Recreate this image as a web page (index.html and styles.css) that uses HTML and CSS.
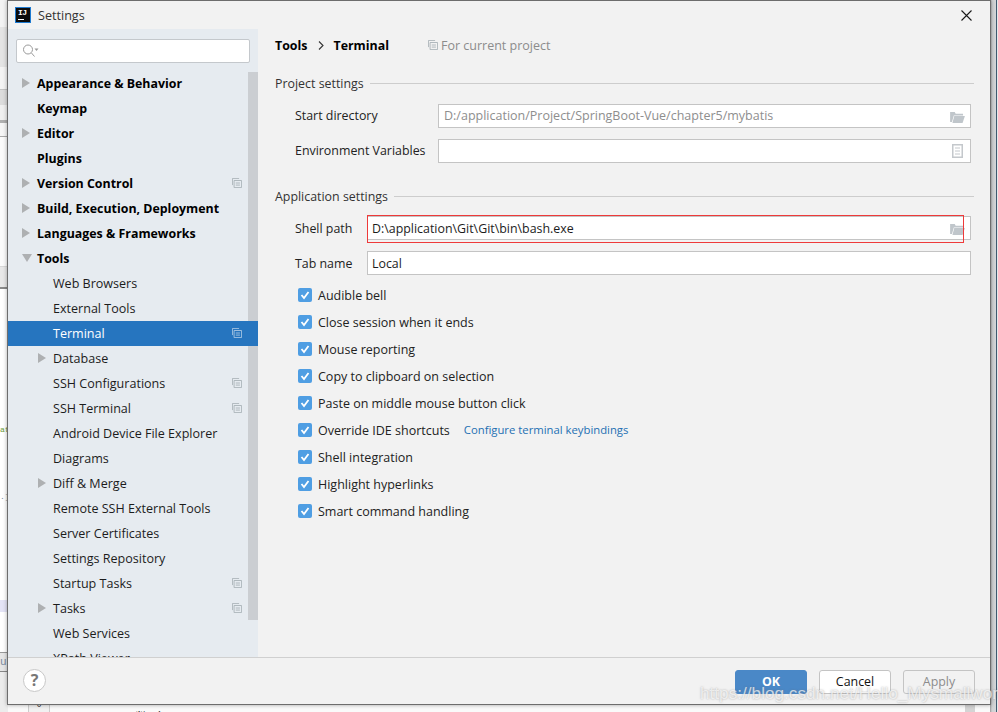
FILE: index.html
```html
<!DOCTYPE html>
<html lang="en">
<head>
<meta charset="utf-8">
<title>Settings</title>
<link rel="stylesheet" href="styles.css">
</head>
<body>
<svg class="defs" width="0" height="0">
  <symbol id="copy" viewBox="0 0 12 12">
    <path d="M.5 8.5V.5h8M2.500 3h9v8.500h-9zM4.500 6h5M4.500 8.500h5" fill="none" stroke="currentColor" stroke-width="1.100"/>
  </symbol>
  <symbol id="folder" viewBox="0 0 16 13">
    <path d="M0 1h5l1 2h8v2H4L2 12H0z" fill="currentColor"/>
    <path d="M4.500 5.500H16L13.500 13H2.500z" fill="currentColor"/>
  </symbol>
  <symbol id="tick" viewBox="0 0 14 14">
    <rect width="14" height="14" rx="2" fill="#4f9ee3"/>
    <path d="M3.500 7l2.500 3 4.500-6" fill="none" stroke="#fff" stroke-width="1.800"/>
  </symbol>
</svg>
<div class="desktop">
  <div class="bg-left">
    <div class="s1"></div><div class="s2"></div><div class="s3"></div><div class="s4"></div><div class="s3b"></div><div class="s5"></div><div class="s6"></div>
    <div class="s7"><span class="code-g">at</span></div>
    <div class="s8"><span class="code-b">.]</span></div>
    <div class="s9"></div><div class="s10"></div><div class="s11"><span class="code-b">u</span></div><div class="s12"></div>
  </div>
  <div class="bg-bottom">
    <div class="gutter">°</div>
    <div class="bottom-text">数 命</div>
    <div class="thumb"></div>
  </div>
  <div class="bg-right"></div>
</div>

<div class="dialog">
  <header class="titlebar">
    <div class="logo"><span class="logo-text">IJ</span><span class="logo-bar"></span></div>
    <span class="title">Settings</span>
    <svg class="close" width="11" height="11" viewBox="0 0 11 11"><path d="M.5.5l10 10M10.500.5l-10 10" stroke="#1a1a1a" stroke-width="1.100" fill="none"/></svg>
  </header>
  <div class="content">
    <aside class="sidebar">
      <div class="search">
        <svg width="17" height="13" viewBox="0 0 17 13"><circle cx="6" cy="5.500" r="4.500" fill="none" stroke="#9a9a9a"/><path d="M9.500 9l3 3.500" stroke="#9a9a9a" fill="none"/><path d="M12.500 4.500h4l-2 2.500z" fill="#9a9a9a"/></svg>
      </div>
      <div class="scrollbar"></div>
      <ul class="tree">
        <li class="row top"><i class="arrow"></i>Appearance &amp; Behavior</li>
        <li class="row top"><i class="gap"></i>Keymap</li>
        <li class="row top"><i class="arrow"></i>Editor</li>
        <li class="row top"><i class="gap"></i>Plugins</li>
        <li class="row top"><i class="arrow"></i>Version Control<svg class="pj"><use href="#copy"/></svg></li>
        <li class="row top"><i class="arrow"></i>Build, Execution, Deployment</li>
        <li class="row top"><i class="arrow"></i>Languages &amp; Frameworks</li>
        <li class="row top"><i class="arrow down"></i>Tools</li>
        <li class="row sub"><i class="gap"></i>Web Browsers</li>
        <li class="row sub"><i class="gap"></i>External Tools</li>
        <li class="row sub selected"><i class="gap"></i>Terminal<svg class="pj"><use href="#copy"/></svg></li>
        <li class="row sub"><i class="arrow"></i>Database</li>
        <li class="row sub"><i class="gap"></i>SSH Configurations<svg class="pj"><use href="#copy"/></svg></li>
        <li class="row sub"><i class="gap"></i>SSH Terminal<svg class="pj"><use href="#copy"/></svg></li>
        <li class="row sub"><i class="gap"></i>Android Device File Explorer</li>
        <li class="row sub"><i class="gap"></i>Diagrams</li>
        <li class="row sub"><i class="arrow"></i>Diff &amp; Merge</li>
        <li class="row sub"><i class="gap"></i>Remote SSH External Tools</li>
        <li class="row sub"><i class="gap"></i>Server Certificates</li>
        <li class="row sub"><i class="gap"></i>Settings Repository</li>
        <li class="row sub"><i class="gap"></i>Startup Tasks<svg class="pj"><use href="#copy"/></svg></li>
        <li class="row sub"><i class="arrow"></i>Tasks<svg class="pj"><use href="#copy"/></svg></li>
        <li class="row sub"><i class="gap"></i>Web Services</li>
        <li class="row sub"><i class="gap"></i>XPath Viewer</li>
      </ul>
    </aside>
    <main class="main">
      <div class="crumbs">
        <b>Tools</b>
        <svg class="chev" width="6" height="9" viewBox="0 0 6 9"><path d="M1 .5l4 4-4 4" fill="none" stroke="#333" stroke-width="1.100"/></svg>
        <b>Terminal</b>
        <span class="scope"><svg class="pj-inline"><use href="#copy"/></svg>For current project</span>
      </div>

      <div class="group-title first"><span>Project settings</span></div>
      <div class="form first-form">
        <div class="field-row">
          <label class="label wide">Start directory</label>
          <div class="input disabled">D:/application/Project/SpringBoot-Vue/chapter5/mybatis<svg class="folder"><use href="#folder"/></svg></div>
        </div>
        <div class="field-row">
          <label class="label wide">Environment Variables</label>
          <div class="input"><svg class="doc" width="11" height="14" viewBox="0 0 11 14"><path d="M0 0h11v14H0z" fill="#c4c8cc"/><path d="M1.500 1.500h8v11h-8z" fill="#fff"/><path d="M3 4h5M3 7h5M3 10h5" stroke="#c4c8cc"/></svg></div>
        </div>
      </div>

      <div class="group-title second"><span>Application settings</span></div>
      <div class="form second-form">
        <div class="field-row">
          <label class="label">Shell path</label>
          <div class="input">D:\application\Git\Git\bin\bash.exe<svg class="folder"><use href="#folder"/></svg></div>
        </div>
        <div class="field-row">
          <label class="label">Tab name</label>
          <div class="input">Local</div>
        </div>
      </div>
      <div class="checks">
        <div class="check"><svg class="box"><use href="#tick"/></svg>Audible bell</div>
        <div class="check"><svg class="box"><use href="#tick"/></svg>Close session when it ends</div>
        <div class="check"><svg class="box"><use href="#tick"/></svg>Mouse reporting</div>
        <div class="check"><svg class="box"><use href="#tick"/></svg>Copy to clipboard on selection</div>
        <div class="check"><svg class="box"><use href="#tick"/></svg>Paste on middle mouse button click</div>
        <div class="check"><svg class="box"><use href="#tick"/></svg>Override IDE shortcuts<a class="link">Configure terminal keybindings</a></div>
        <div class="check"><svg class="box"><use href="#tick"/></svg>Shell integration</div>
        <div class="check"><svg class="box"><use href="#tick"/></svg>Highlight hyperlinks</div>
        <div class="check"><svg class="box"><use href="#tick"/></svg>Smart command handling</div>
      </div>
    </main>
  </div>
  <footer class="footer">
    <div class="help">?</div>
    <div class="buttons">
      <button class="btn ok">OK</button>
      <button class="btn">Cancel</button>
      <button class="btn off">Apply</button>
    </div>
  </footer>
</div>

<div class="redbox"></div>
<div class="watermark">https://blog.csdn.net/Hello_Mysmallworld</div>
</body>
</html>
```

FILE: styles.css
```css
* { box-sizing: border-box; }
html, body { margin: 0; height: 712px; overflow: hidden; }
body {
  position: relative;
  width: 998px;
  font-family: "Open Sans", "Noto Sans", sans-serif;
  font-size: 12.4px;
  color: #1c1c1c;
  background: #fff;
}
.defs { position: absolute; }
.desktop { position: absolute; inset: 0; }

/* desktop behind the dialog */
.bg-left { position: absolute; left: 0; top: 0; width: 8px; height: 712px; display: flex; flex-direction: column; }
.bg-left > div { flex: none; position: relative; overflow: hidden; }
.s1 { height: 27px; background: #f3f3f3; }
.s2 { height: 40px; background: #e4e4e4; }
.s3 { height: 23px; background: #f4f4f4; border-bottom: 1px solid #c4c4c4; }
.s4 { height: 33px; background: #f0f0f0; border-top: 15px solid #dcdcdc; border-bottom: 3px solid #b0b0b0; }
.s3b { height: 14px; background: #f6f6f6; border-bottom: 1px solid #aaa; }
.s5 { height: 130px; background: #fbfbfb; border-bottom: 1px solid #d8d8d8; }
.s6 { height: 22px; background: #e8e8e8; border-bottom: 2px solid #8a8a8a; }
.s7 { height: 180px; background: #fff; }
.s8 { height: 131px; background: #fff; }
.s9 { height: 12px; background: #e4e4f6; }
.s10 { height: 41px; background: #fff; border-bottom: 1px solid #999; }
.s11 { height: 19px; background: #e6e6e6; border-bottom: 1px solid #888; }
.s12 { height: 40px; background: #ececec; }
.code-g, .code-b { position: absolute; left: 0; font-family: "Liberation Mono", monospace; font-size: 8px; line-height: 14px; white-space: nowrap; }
.code-g { top: 134px; color: #6a9a3a; }
.code-b { top: 21px; color: #7a8aa0; }
.s11 .code-b { top: 2px; font-size: 11px; }
.bg-bottom { position: absolute; left: 8px; top: 704px; width: 982px; height: 8px; background: #fafafa; overflow: hidden; }
.gutter { position: absolute; left: 20px; top: 0; width: 22px; height: 8px; background: #f1f1f1; border: solid #ccc; border-width: 0 1px; text-align: center; font-size: 11px; line-height: 6px; color: #222; }
.bottom-text { position: absolute; left: 127px; top: 5px; font-size: 14px; line-height: 16px; color: #111; font-family: "Noto Sans CJK SC", sans-serif; }
.thumb { position: absolute; left: 957px; top: 0; width: 10px; height: 8px; background: #d4d4d4; }
.bg-right { position: absolute; right: 0; top: 0; width: 8px; height: 712px; background: linear-gradient(to right, #9a9a9a, #cfd2d4 2px, #d4d6d8 6px, #3f5a70 6px, #3f5a70 7px, #e8e8e8 7px); }

/* dialog window */
.dialog {
  position: absolute;
  left: 7px;
  top: 0;
  width: 984px;
  height: 705px;
  display: flex;
  flex-direction: column;
  background: #f2f2f2;
  border: 1px solid #6d6d6d;
  box-shadow: 0 0 4px rgba(0,0,0,.35);
}
.titlebar { flex: none; height: 28px; display: flex; align-items: center; padding: 0 18px 0 7px; }
.logo { position: relative; width: 16px; height: 16px; background: #0b0b0b; border: 1px solid #1e7ad0; margin-right: 7px; }
.logo-text { display: block; font-family: "Liberation Mono", monospace; font-weight: 700; font-size: 8px; line-height: 8px; color: #fff; padding: 1px 0 0 2px; letter-spacing: -.5px; }
.logo-bar { position: absolute; left: 2px; bottom: 2px; width: 6px; height: 1px; background: #fff; }
.title { flex: 1; color: #333; font-size: 12.6px; }
.close { flex: none; }
.content { flex: 1; display: flex; min-height: 0; }

/* sidebar */
.sidebar { position: relative; flex: none; width: 250px; background: #e6ebf0; overflow: hidden; }
.search { position: absolute; left: 8px; top: 10px; width: 234px; height: 24px; background: #fff; border: 1px solid #c4c8cc; border-radius: 2px; padding: 4px 0 0 5px; line-height: 0; }
.scrollbar { position: absolute; right: 0; top: 43px; width: 10px; height: 548px; background: #cbced2; z-index: 0; }
.tree { position: relative; list-style: none; margin: 42px 0 0; padding: 0; }
.row { position: relative; display: flex; align-items: center; height: 25px; padding-bottom: 1px; white-space: nowrap; }
.top { font-weight: 700; color: #000; }
.sub { padding-left: 16px; font-size: 12.55px; }
.selected { background: #2675bf; color: #fff; }
.arrow { flex: none; width: 0; height: 0; margin: 0 7px 0 14px; border-style: solid; border-width: 5px 0 5px 8px; border-color: transparent transparent transparent #aeb0b2; }
.arrow.down { border-width: 8px 5px 0 5px; border-color: #aeb0b2 transparent transparent transparent; margin: 0 5px 0 14px; }
.gap { flex: none; width: 29px; }
.pj { position: absolute; left: 224px; top: 7px; width: 10px; height: 10px; color: #aab2b8; }
.selected .pj { color: #a9c6e2; }

/* main */
.main { flex: 1; min-width: 0; padding: 0 19px 0 17px; }
.crumbs { display: flex; align-items: center; height: 20px; margin-top: 6px; color: #000; }
.crumbs b { font-weight: 700; }
.chev { margin: 0 9px 0 11px; }
.scope { display: flex; align-items: center; margin-left: 39px; color: #8c8c8c; font-size: 12.5px; }
.pj-inline { width: 10px; height: 10px; margin-right: 3px; color: #aab2b8; }
.group-title { display: flex; align-items: center; height: 20px; color: #333; }
.group-title::after { content: ""; flex: 1; height: 1px; background: #cdcdcd; margin-left: 6px; margin-right: -3px; }
.group-title.first { margin-top: 18px; }
.group-title.second { margin-top: 23px; }
.form { display: flex; flex-direction: column; gap: 11px; padding-left: 20px; }
.first-form { margin-top: 11px; }
.second-form { margin-top: 10px; }
.field-row { display: flex; align-items: center; }
.label { flex: none; width: 72px; color: #222; }
.label.wide { width: 143px; }
.first-form .label { padding-bottom: 1px; }
.input { position: relative; flex: 1; height: 24px; line-height: 23px; padding-left: 4px; background: #fff; border: 1px solid #c4c4c4; color: #1c1c1c; white-space: nowrap; }
.disabled { color: #8e8e8e; padding-left: 5px; line-height: 22px; font-size: 12.5px; }
.folder { position: absolute; right: 5px; top: 6px; width: 15px; height: 12px; color: #c0c6cb; }
.doc { position: absolute; right: 7px; top: 4px; }

.checks { margin: 7px 0 0 23px; font-size: 12.5px; }
.check { display: flex; align-items: center; height: 27px; color: #222; }
.box { flex: none; width: 14px; height: 14px; margin: 0 6px 2px 0; }
.link { margin: 0 0 2px 14px; font-size: 11.300px; color: #2470b3; }

/* footer */
.footer { flex: none; height: 47px; display: flex; justify-content: space-between; align-items: flex-start; padding: 12px 15px 0 15px; border-top: 1px solid #d0d0d0; }
.help { width: 23px; height: 23px; border-radius: 50%; background: #fff; border: 1px solid #c8c8c8; text-align: center; font-weight: 700; font-size: 16px; line-height: 20px; color: #777; margin-top: -1px; }
.buttons { display: flex; gap: 12px; }
.btn { width: 72px; height: 24px; padding: 0 0 1px; font: inherit; background: #fff; border: 1px solid #c4c4c4; border-radius: 3px; color: #111; }
.ok { background: #4a88c7; border-color: #4a88c7; color: #fff; font-weight: 700; }
.off { background: #f2f2f2; color: #8c8c8c; }

/* annotations over the screenshot */
.redbox { position: absolute; left: 367px; top: 215px; width: 597px; height: 28px; border: 1px solid #ee3a3a; }
.watermark { position: absolute; left: 700px; top: 683px; font-family: "Liberation Sans", sans-serif; font-size: 17.200px; line-height: 20px; white-space: nowrap; color: rgba(255,255,255,.7); text-shadow: 0 0 2px rgba(110,110,110,.55); }
```
